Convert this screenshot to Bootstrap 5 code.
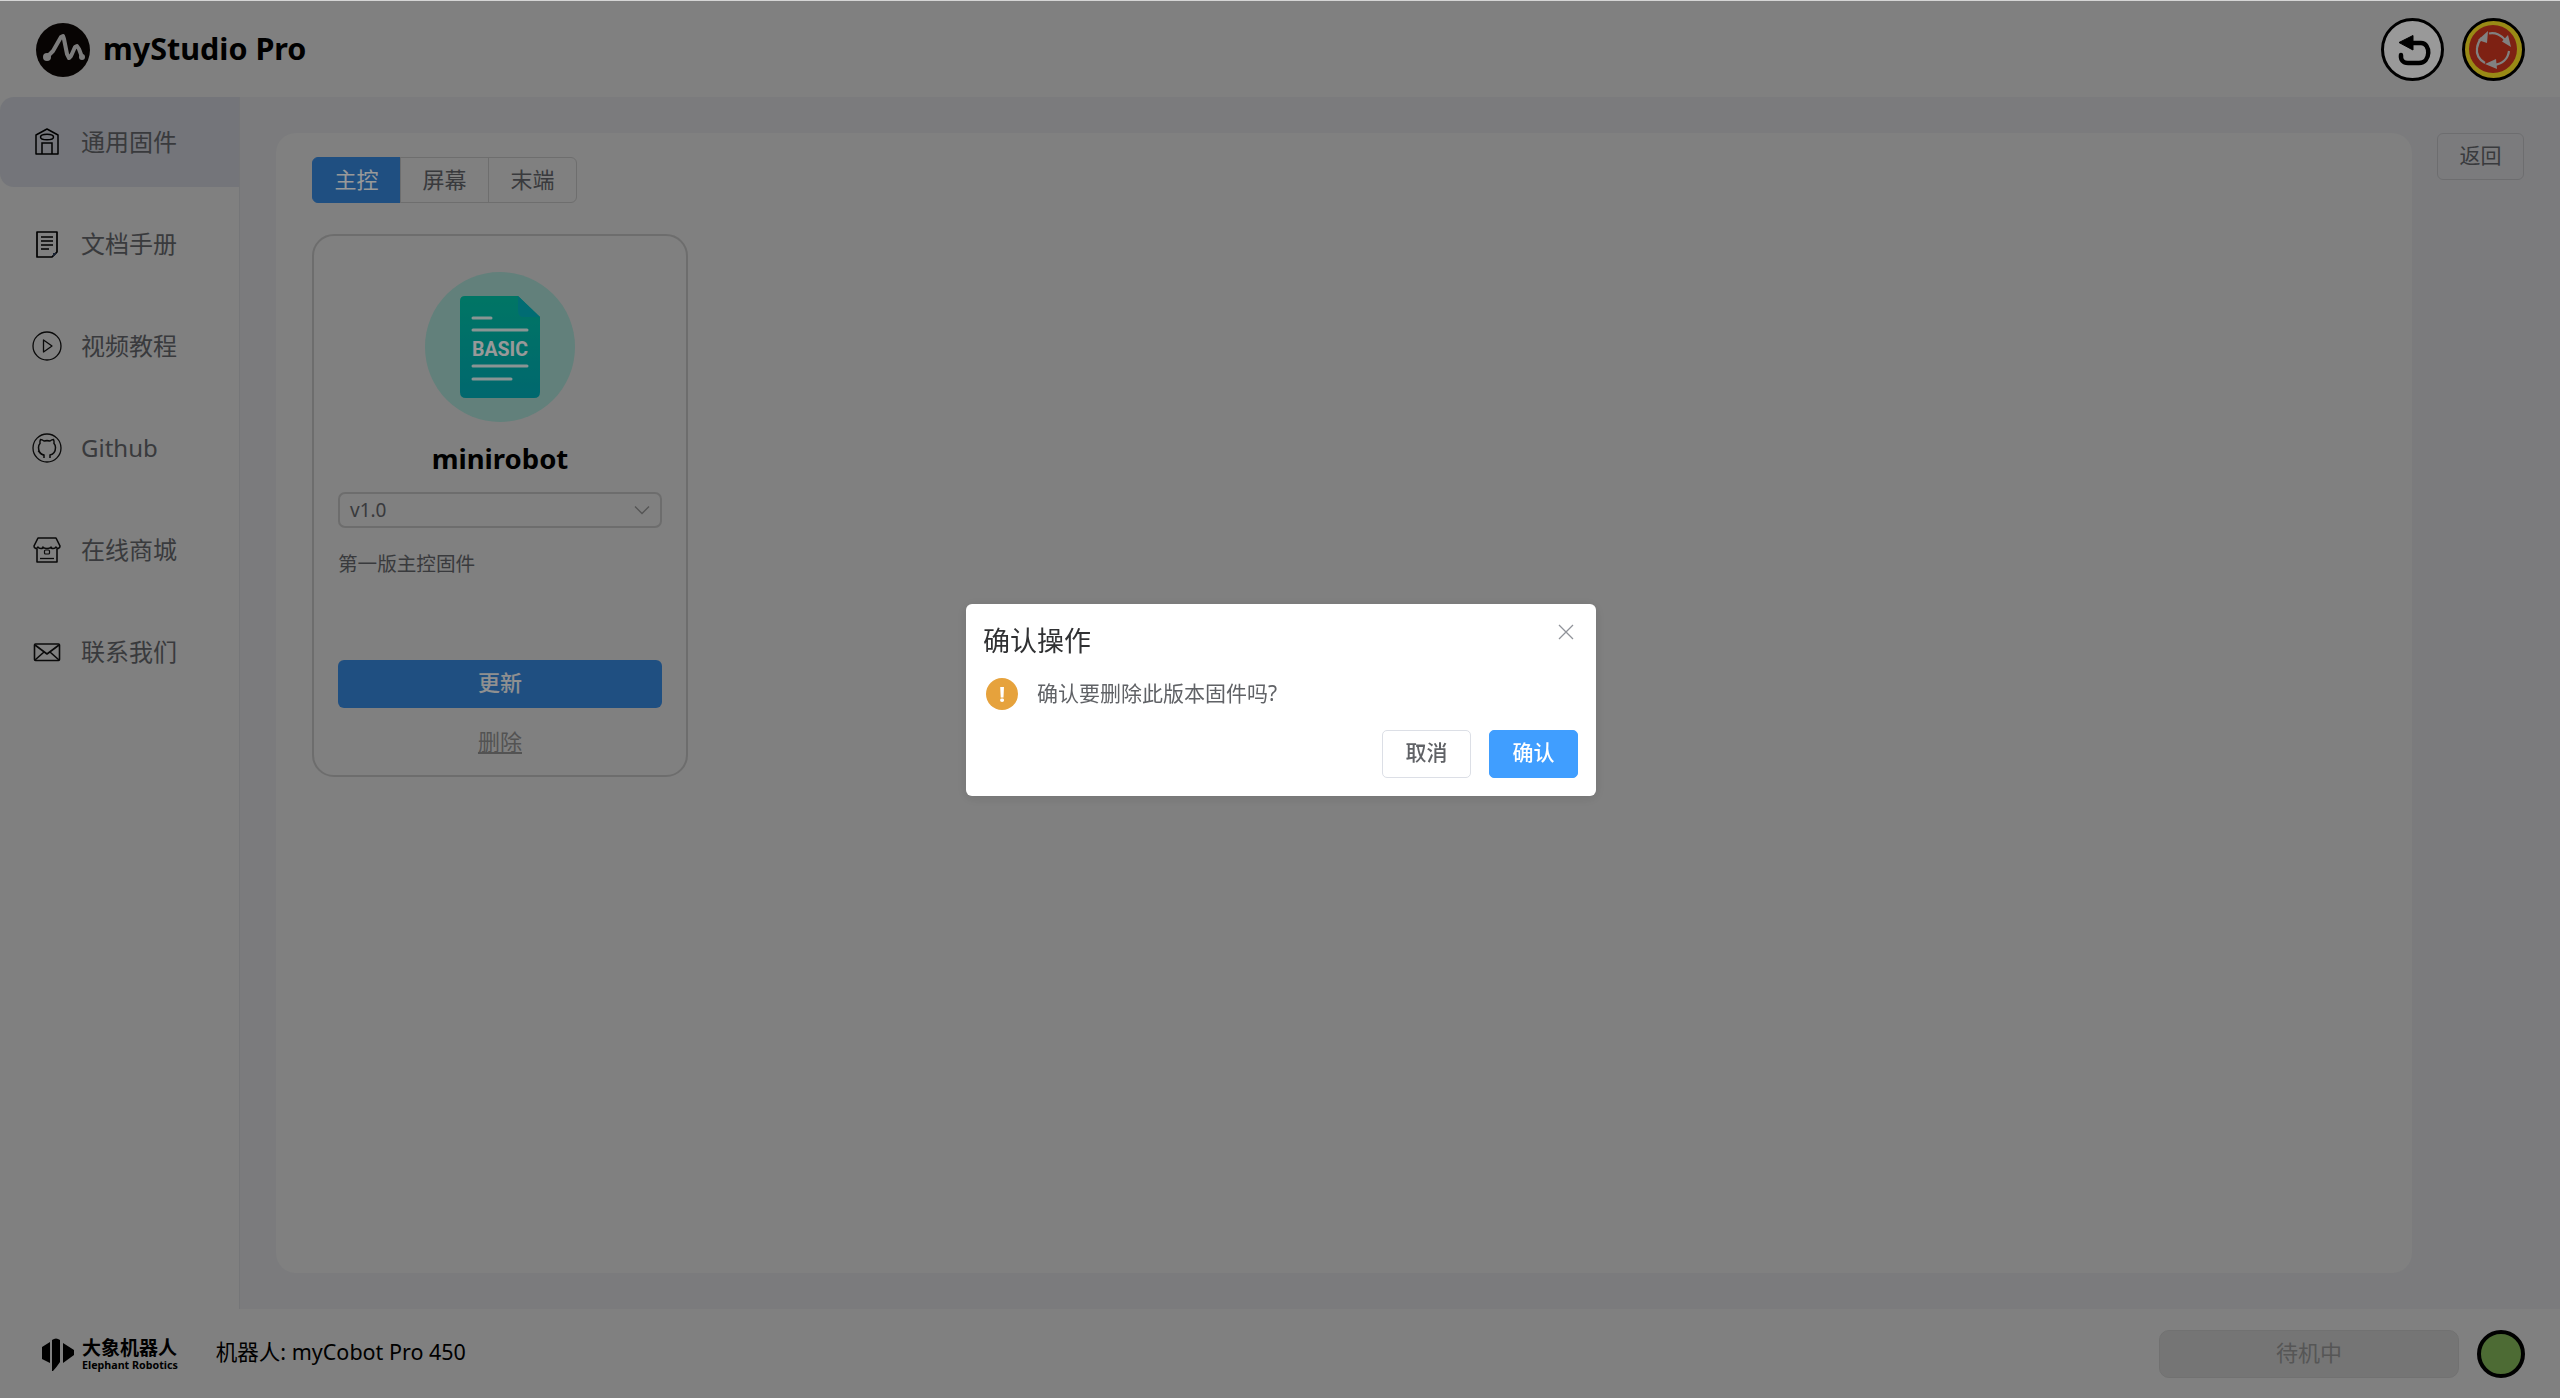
<!DOCTYPE html>
<html lang="zh">
<head>
<meta charset="utf-8">
<title>myStudio Pro</title>
<link href="https://cdn.jsdelivr.net/npm/bootstrap@5.3.0/dist/css/bootstrap.min.css" rel="stylesheet">
<style>
html,body{height:100%}
body{font-family:"Noto Sans","Noto Sans CJK SC",sans-serif;background:#d5d5d5;color:#606266;overflow:hidden}
.app-shell{height:1398px}
.app-top{height:97px;padding:18px 35px 16px 36px;background:#d5d5d5}
.brand-name{font-size:30.500px;font-weight:700;color:#000;line-height:54px;margin-left:13px;margin-bottom:3px}
.round-ctl{width:63px;height:63px;border:3px solid #000;border-radius:50%;background:#fff;padding:0;display:flex;align-items:center;justify-content:center}
.round-stop{background:#ffe626;margin-left:18px}
.middle{min-height:0}
.side-nav{width:240px;border-right:1px solid #c4c5c8}
.side-item{height:90px;margin-bottom:12px;padding-left:30px;font-size:24px;color:#606266;text-decoration:none}
.side-item.is-on{background:#c1c4cb;border-radius:14px 0 0 14px}
.side-ico{width:34px;height:34px;margin-right:17px;flex:none}
.main-zone{background:#cdced1;padding:36px}
.panel{background:#d5d5d5;border-radius:20px;padding:24px 36px}
.seg .btn{width:89px;height:46px;font-size:22px;line-height:1;padding:0 0 3px;color:#606266;border-color:#b8b8b8;background:transparent}
.seg .btn.on{background:#3584d8;border-color:#3584d8;color:#fff}
.fw-card{width:376px;height:543px;border:2px solid #b6b6b6;border-radius:22px;padding:36px 24px 17px;background:transparent;margin-top:31px}
.fw-disc{width:150px;height:150px;border-radius:50%;background:#a3d5cd}
.fw-name{font-size:27.500px;font-weight:700;color:#000;line-height:40px;margin-top:17px;margin-bottom:1px;text-align:center}
.fw-select{height:36px;margin-top:13px;font-size:19px;color:#606266;background-color:transparent;border:2px solid #b6b6b6;border-radius:7px;padding:0 10px;line-height:31px}
.fw-desc{font-size:19.600px;line-height:36px;margin-top:18px;color:#606266}
.fw-update{height:48px;margin-top:78px;width:100%;background:#3584d8;border:0;border-radius:6px;color:#f0f0f0;font-size:22px;font-weight:500;padding:0 0 5px;line-height:1}
.fw-del{display:block;text-align:center;font-size:22px;line-height:28px;margin-top:19px;margin-bottom:2px;color:#8a8a8a}
.back-btn{width:87px;height:47px;margin-left:25px;padding:0 0 3px;font-size:21px;line-height:1;color:#606266;border:1px solid #b6b6ba;border-radius:6px;background:transparent}
.app-foot{height:89px;padding:21px 35px 20px 42px;background:#d5d5d5}
.logo-cn{font-size:19px;font-weight:700;color:#000;line-height:22px}
.logo-en{font-size:10.700px;font-weight:700;color:#000;line-height:13px;white-space:nowrap}
.robot-name{font-size:21.500px;color:#000;margin-left:38px;margin-bottom:3px}
.state-box{width:300px;height:48px;border-radius:10px;font-size:22px;padding:0 0 5px;line-height:1}
.state-box:disabled{opacity:1;background:#c4c4c4;border:1px solid #bdbdbd;color:#8f8f8f}
.state-dot{width:48px;height:48px;border:4px solid #000;border-radius:50%;background:#80b258;margin-left:18px}
.veil{position:fixed;inset:1px 0 0 0;background:rgba(0,0,0,.4);z-index:50}
.dlg{width:630px;height:192px;margin-left:2px;background:#fff;border-radius:6px;padding:17px 18px 18px 17px;box-shadow:0 2px 12px rgba(0,0,0,.1);position:relative}
.dlg-title{font-size:27px;line-height:40px;color:#303133}
.dlg-x{position:absolute;top:20px;right:22px;width:16px;height:16px;padding:0;border:0;background:none;line-height:0}
.dlg-body{margin-top:17px;height:32px;padding-left:3px;font-size:21px;color:#606266}
.dlg-warn{width:32px;height:32px;border-radius:50%;background:#e6a23c;color:#fff;font-weight:700;font-size:22px;line-height:31px;text-align:center;margin-right:19px;flex:none}
.dlg-foot{margin-top:20px}
.dlg-btn{width:89px;height:48px;font-size:21px;font-weight:500;padding:0 0 2px;border-radius:5px;line-height:1}
.dlg-no{background:#fff;border:1px solid #dcdfe6;color:#606266}
.dlg-yes{background:#409eff;border:1px solid #409eff;color:#fff;margin-left:18px}
</style>
</head>
<body>
<div class="app-shell d-flex flex-column">
  <header class="app-top d-flex align-items-center justify-content-between flex-none">
    <div class="d-flex align-items-center">
      <svg width="54" height="54" viewBox="0 0 54 54"><circle cx="27" cy="27" r="27" fill="#0d0806"/><path d="M11 34 L17 28 L25 14 L27 13 L28 16 L31 31 L33 35 L35 33 L39 24 L41 23 L43 26 L46 34" fill="none" stroke="#cfcfcf" stroke-width="4" stroke-linecap="round" stroke-linejoin="round"/><circle cx="11" cy="34" r="4" fill="#cfcfcf"/><circle cx="46" cy="34" r="3" fill="#cfcfcf"/></svg>
      <span class="brand-name">myStudio Pro</span>
    </div>
    <div class="d-flex">
      <button class="round-ctl" aria-label="撤销"><svg width="57" height="57" viewBox="3 3 57 57"><path d="M28 25 H40 C50 25 50 45 38 45 H27 C22 45 19.500 42 20 37" fill="none" stroke="#000" stroke-width="4.500" stroke-linecap="round"/><path d="M18 24.500 L32 17.500 V32 Z" fill="#000" stroke="#000" stroke-width="1" stroke-linejoin="round"/></svg></button>
      <button class="round-ctl round-stop" aria-label="急停"><svg width="57" height="57" viewBox="3 3 57 57"><circle cx="31" cy="31" r="24" fill="#d23820"/><g fill="none" stroke="#d8d8d8" stroke-width="2.200"><path d="M27 15.500 C33 14 40 17 44 23"/><path d="M47 33 C46 41 40 46 32 47"/><path d="M23 45 C17 42 14 36 15 30 C15.500 26 17 23 19.500 20"/></g><g fill="#d8d8d8"><path d="M40 23.500 L46 17 L49 29 Z"/><path d="M34 41 L35 51 L23 46 Z"/><path d="M16 22 L26 13 L25 25 Z"/></g></svg></button>
    </div>
  </header>

  <div class="middle d-flex flex-grow-1">
    <nav class="side-nav flex-none">
      <a class="side-item is-on d-flex align-items-center" href="#"><svg class="side-ico" viewBox="0 0 34 34" fill="none" stroke="#000" stroke-width="1.500"><path d="M6 29 V10 L17 4 L28 10 V29 Z" stroke-linejoin="round"/><ellipse cx="17" cy="12" rx="6.500" ry="2.800"/><path d="M12 29 V18 H22 V29"/></svg>通用固件</a>
      <a class="side-item d-flex align-items-center" href="#"><svg class="side-ico" viewBox="0 0 34 34" fill="none" stroke="#000" stroke-width="1.700"><path d="M7 5 H27 V25 L22 30 H7 Z" stroke-linejoin="round"/><path d="M11 10 H23 M11 14 H23 M11 18 H23 M11 22 H19" stroke-width="1.300"/><path d="M23 26 H27 L23 30 Z" fill="#2a3a55" stroke="none"/></svg>文档手册</a>
      <a class="side-item d-flex align-items-center" href="#"><svg class="side-ico" viewBox="0 0 34 34" fill="none" stroke="#111" stroke-width="1.300"><circle cx="17" cy="17" r="14"/><path d="M13.500 11 L22 17 L13.500 23 Z" stroke-linejoin="round"/></svg>视频教程</a>
      <a class="side-item d-flex align-items-center" href="#"><svg class="side-ico" viewBox="0 0 34 34" fill="none" stroke="#111" stroke-width="1.300"><circle cx="17" cy="17" r="14"/><path d="M14 27 V24 C10 23 8.500 20 8.500 16.500 C8.500 15 9 13.500 10 12.500 C9.700 11 10 9.500 10.500 8.500 C12 8.500 13 9.200 14 10 C16 9.500 18 9.500 20 10 C21 9.200 22 8.500 23.500 8.500 C24 9.500 24.300 11 24 12.500 C25 13.500 25.500 15 25.500 16.500 C25.500 20 24 23 20 24 V27" stroke-width="1.500"/><path d="M8 20 C10 21 10 24 14 24" stroke-width="1.300"/></svg>Github</a>
      <a class="side-item d-flex align-items-center" href="#"><svg class="side-ico" viewBox="0 0 34 34" fill="none" stroke="#111" stroke-width="1.600" stroke-linejoin="round"><path d="M8 5 H26 L30 13 C30 16 27 16 26 14 C25 16 21 16 21 14 C20 16 14 16 13 14 C13 16 9 16 8 14 C7 16 4 16 4 13 Z"/><path d="M7 16 V29 H27 V16"/><path d="M10 25.500 H24" stroke-width="1.300"/><rect x="14.500" y="17" width="5" height="4" rx="1" stroke-width="1.200"/></svg>在线商城</a>
      <a class="side-item d-flex align-items-center" href="#"><svg class="side-ico" viewBox="0 0 34 34" fill="none" stroke="#111" stroke-width="1.600" stroke-linejoin="round"><rect x="4.500" y="9" width="25" height="16.500" rx="1"/><path d="M5 10 L17 19 L29 10 M5 25 L14 17 M29 25 L20 17"/></svg>联系我们</a>
    </nav>

    <main class="main-zone d-flex flex-grow-1 align-items-start">
      <section class="panel flex-grow-1 align-self-stretch">
        <div class="seg btn-group" role="group">
          <button class="btn on">主控</button>
          <button class="btn">屏幕</button>
          <button class="btn">末端</button>
        </div>
        <div class="fw-card">
          <div class="fw-disc mx-auto d-flex align-items-center justify-content-center">
            <svg width="80" height="102" viewBox="0 0 80 102">
              <defs><linearGradient id="docg" x1="0" y1="0" x2="0" y2="1"><stop offset="0" stop-color="#00c4a8"/><stop offset="1" stop-color="#00adb8"/></linearGradient></defs>
              <path d="M5 0 H58 L80 21 V96 Q80 102 74 102 H6 Q0 102 0 96 V5 Q0 0 5 0 Z" fill="url(#docg)"/>
              <path d="M58 0 L80 21 H64 Q58 21 58 15 Z" fill="#00b5c0"/>
              <g stroke="#fff" stroke-width="3" stroke-linecap="round" opacity=".9"><path d="M13 22 H31 M13 34 H67 M13 70 H67 M13 83 H51"/></g>
              <text x="40" y="60" text-anchor="middle" font-family="Roboto,sans-serif" font-weight="700" font-size="20" textLength="56" lengthAdjust="spacingAndGlyphs" fill="#fff">BASIC</text>
            </svg>
          </div>
          <div class="fw-name">minirobot</div>
          <div class="fw-select d-flex justify-content-between align-items-center">
            <span>v1.0</span>
            <svg width="16" height="10" viewBox="0 0 16 10" fill="none" stroke="#8c8c8c" stroke-width="1.300"><path d="M1 1.500 L8 8.500 L15 1.500"/></svg>
          </div>
          <div class="fw-desc">第一版主控固件</div>
          <button class="btn fw-update">更新</button>
          <a class="fw-del" href="#">删除</a>
        </div>
      </section>
      <button class="btn back-btn flex-none">返回</button>
    </main>
  </div>

  <footer class="app-foot d-flex align-items-center justify-content-between flex-none">
    <div class="d-flex align-items-center">
      <svg width="32" height="33" viewBox="0 0 32 33"><path d="M0 9 L8 4 V25 L0 21 Z M10 2 Q14 -1 18 2 V24 Q14 30 11 33 H10 Z M21 5 L32 12 V17 L21 25 Z" fill="#000"/></svg>
      <div class="ms-2">
        <div class="logo-cn">大象机器人</div>
        <div class="logo-en">Elephant Robotics</div>
      </div>
      <span class="robot-name">机器人: myCobot Pro 450</span>
    </div>
    <div class="d-flex align-items-center">
      <button class="btn state-box" disabled>待机中</button>
      <div class="state-dot"></div>
    </div>
  </footer>
</div>

<div class="veil d-flex align-items-center justify-content-center">
  <div class="dlg" role="dialog" aria-modal="true">
    <button class="dlg-x" aria-label="关闭"><svg width="16" height="16" viewBox="0 0 16 16" stroke="#909399" stroke-width="1.300"><path d="M1 1 L15 15 M15 1 L1 15"/></svg></button>
    <div class="dlg-title">确认操作</div>
    <div class="dlg-body d-flex align-items-center"><span class="dlg-warn">!</span>确认要删除此版本固件吗?</div>
    <div class="dlg-foot d-flex justify-content-end">
      <button class="btn dlg-btn dlg-no">取消</button>
      <button class="btn dlg-btn dlg-yes">确认</button>
    </div>
  </div>
</div>
<script src="https://cdn.jsdelivr.net/npm/bootstrap@5.3.0/dist/js/bootstrap.bundle.min.js"></script>
</body>
</html>
